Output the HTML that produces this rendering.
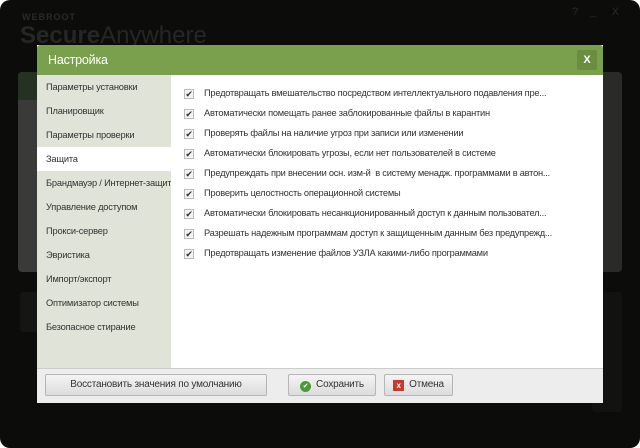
<!DOCTYPE html>
<html><head><meta charset="utf-8"><style>
*{margin:0;padding:0;box-sizing:border-box}
body{width:640px;height:448px;background:#fff;font-family:"Liberation Sans","DejaVu Sans",sans-serif;overflow:hidden;position:relative}
.win{position:absolute;left:0;top:0;width:640px;height:448px;background:#0c0d0b;border-radius:10px}
.abs{position:absolute}
.dlg{position:absolute;left:37px;top:45px;width:566px;height:358px;background:#fff}
.hdr{position:absolute;left:0;top:0;width:566px;height:30px;background:#7ba04d;border-radius:3px 3px 0 0}
.hdr span{position:absolute;left:11px;top:8px;color:#fff;font-size:12.5px;letter-spacing:-0.2px}
.x{position:absolute;right:6px;top:5px;width:20px;height:20px;background:#6a8d40;color:#fff;font-size:11px;font-weight:bold;text-align:center;line-height:20px;border-radius:2px}
.side{position:absolute;left:0;top:30px;width:134px;height:293px;background:#e0e3d8}
.side div{position:absolute;left:0;width:134px;height:24px;font-size:9.3px;letter-spacing:-0.2px;color:#333;padding-left:9px;line-height:24px;white-space:nowrap;overflow:hidden}
.side .sel{background:#fff}
.row{position:absolute;left:148px;font-size:9.3px;letter-spacing:-0.25px;color:#333;white-space:nowrap}
.cb{position:absolute;left:-1px;top:1px;width:10px;height:10px;border:1px solid #bbb;background:#f3f3f3;font-size:9px;line-height:8px;text-align:center;color:#333;font-style:normal}
.row span{position:absolute;left:19px;top:0}
.bot{position:absolute;left:0;top:323px;width:566px;height:35px;background:#ededed;border-top:1px solid #ccc}
.btn{position:absolute;top:5px;height:22px;border:1px solid #b5b5b5;border-radius:2px;background:linear-gradient(#f4f4f4,#dcdcdc);font-size:10px;letter-spacing:-0.2px;color:#333;line-height:20px;text-align:center}
</style></head><body>
<div class="win">
<div class="abs" style="left:22px;top:12px;color:#2a2a2a;font-size:9px;font-weight:bold;letter-spacing:1px">WEBROOT</div>
<div class="abs" style="left:20px;top:22px;color:#262626;font-size:24px;font-weight:bold">Secure<span style="font-weight:normal">Anywhere</span></div>
<div class="abs" style="left:572px;top:6px;color:#2a2a2a;font-size:11px">?&nbsp;&nbsp;&nbsp;&nbsp;_&nbsp;&nbsp;&nbsp;&nbsp;&nbsp;X</div>
<div class="abs" style="left:18px;top:72px;width:30px;height:200px;background:#3a3b38;border-radius:4px"></div>
<div class="abs" style="left:18px;top:72px;width:30px;height:28px;background:#253223;border-radius:4px 0 0 0"></div>
<div class="abs" style="left:592px;top:72px;width:30px;height:200px;background:#2a2b29;border-radius:4px"></div>
<div class="abs" style="left:20px;top:292px;width:30px;height:40px;background:#151614;border-radius:4px"></div>
<div class="abs" style="left:592px;top:292px;width:30px;height:120px;background:#121311;border-radius:4px"></div>
</div>
<div class="dlg">
<div class="hdr"><span>Настройка</span><div class="x">X</div></div>
<div class="side">
<div style="top:0">Параметры установки</div>
<div style="top:24px">Планировщик</div>
<div style="top:48px">Параметры проверки</div>
<div class="sel" style="top:72px">Защита</div>
<div style="top:96px">Брандмауэр / Интернет-защита</div>
<div style="top:120px">Управление доступом</div>
<div style="top:144px">Прокси-сервер</div>
<div style="top:168px">Эвристика</div>
<div style="top:192px">Импорт/экспорт</div>
<div style="top:216px">Оптимизатор системы</div>
<div style="top:240px">Безопасное стирание</div>
</div>
<div class="row" style="top:43px"><i class="cb">✔</i><span>Предотвращать вмешательство посредством интеллектуального подавления пре...</span></div>
<div class="row" style="top:63px"><i class="cb">✔</i><span>Автоматически помещать ранее заблокированные файлы в карантин</span></div>
<div class="row" style="top:83px"><i class="cb">✔</i><span>Проверять файлы на наличие угроз при записи или изменении</span></div>
<div class="row" style="top:103px"><i class="cb">✔</i><span>Автоматически блокировать угрозы, если нет пользователей в системе</span></div>
<div class="row" style="top:123px"><i class="cb">✔</i><span>Предупреждать при внесении осн. изм-й&nbsp; в систему менадж. программами в автон...</span></div>
<div class="row" style="top:143px"><i class="cb">✔</i><span>Проверить целостность операционной системы</span></div>
<div class="row" style="top:163px"><i class="cb">✔</i><span>Автоматически блокировать несанкционированный доступ к данным пользовател...</span></div>
<div class="row" style="top:183px"><i class="cb">✔</i><span>Разрешать надежным программам доступ к защищенным данным без предупрежд...</span></div>
<div class="row" style="top:203px"><i class="cb">✔</i><span>Предотвращать изменение файлов УЗЛА какими-либо программами</span></div>
<div class="bot">
<div class="btn" style="left:8px;width:222px">Восстановить значения по умолчанию</div>
<div class="btn" style="left:251px;width:88px"><span style="display:inline-block;width:11px;height:11px;border-radius:50%;background:#4a9a3a;color:#fff;font-size:7px;line-height:11px;vertical-align:-1px;margin-right:5px">✔</span>Сохранить</div>
<div class="btn" style="left:347px;width:69px"><span style="display:inline-block;width:11px;height:11px;background:#c8392b;color:#fff;font-size:8px;line-height:11px;vertical-align:-1px;margin-right:5px;font-weight:bold">x</span>Отмена</div>
</div>
</div>
</body></html>
